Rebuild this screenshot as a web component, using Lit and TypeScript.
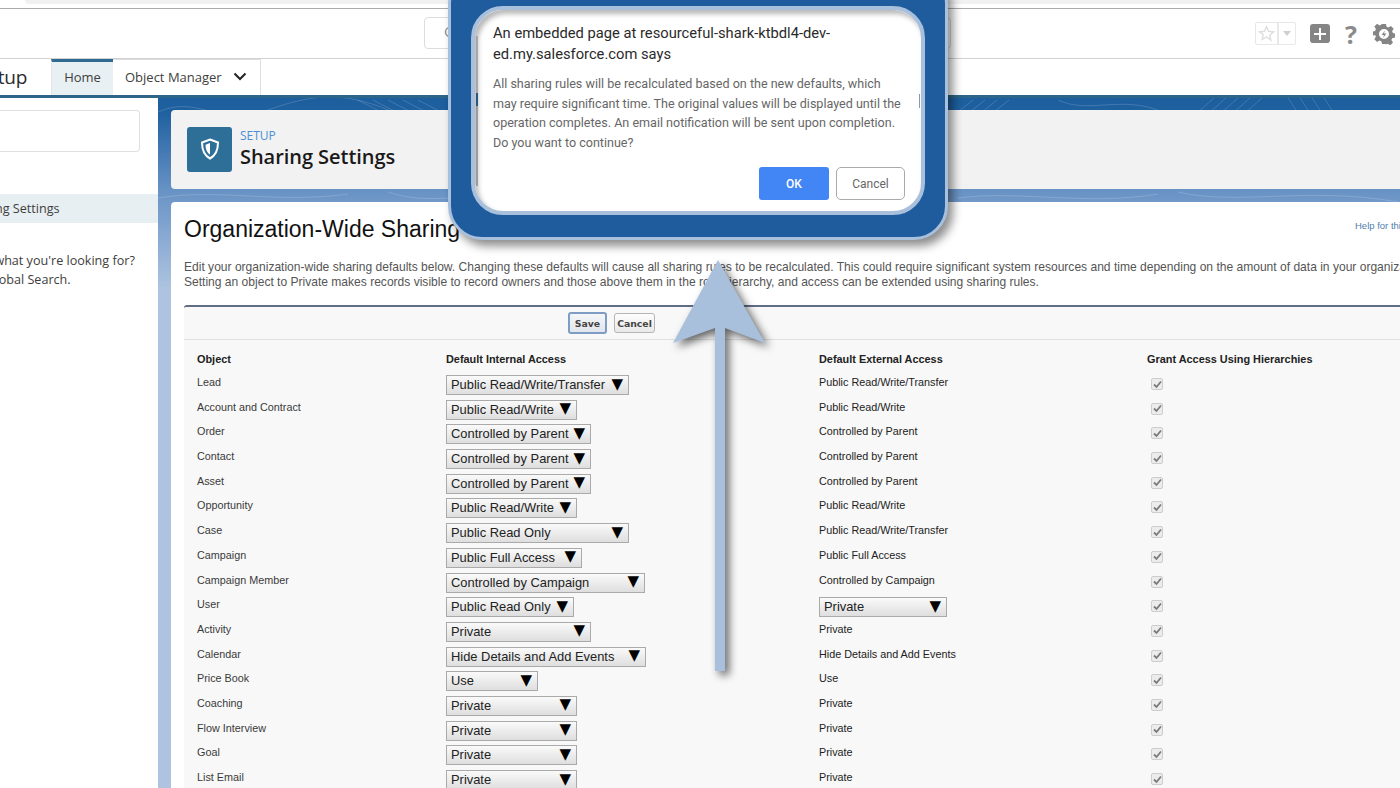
import { LitElement, html, css, svg } from "lit";
import { customElement } from "lit/decorators.js";

interface Row { name: string; sel: string; w: number; ext: string; extW?: number }
const rows: Row[] = [
  { name: "Lead", sel: "Public Read/Write/Transfer", w: 183, ext: "Public Read/Write/Transfer" },
  { name: "Account and Contract", sel: "Public Read/Write", w: 131, ext: "Public Read/Write" },
  { name: "Order", sel: "Controlled by Parent", w: 145, ext: "Controlled by Parent" },
  { name: "Contact", sel: "Controlled by Parent", w: 145, ext: "Controlled by Parent" },
  { name: "Asset", sel: "Controlled by Parent", w: 145, ext: "Controlled by Parent" },
  { name: "Opportunity", sel: "Public Read/Write", w: 131, ext: "Public Read/Write" },
  { name: "Case", sel: "Public Read Only", w: 183, ext: "Public Read/Write/Transfer" },
  { name: "Campaign", sel: "Public Full Access", w: 136, ext: "Public Full Access" },
  { name: "Campaign Member", sel: "Controlled by Campaign", w: 199, ext: "Controlled by Campaign" },
  { name: "User", sel: "Public Read Only", w: 128, ext: "Private", extW: 128 },
  { name: "Activity", sel: "Private", w: 145, ext: "Private" },
  { name: "Calendar", sel: "Hide Details and Add Events", w: 200, ext: "Hide Details and Add Events" },
  { name: "Price Book", sel: "Use", w: 92, ext: "Use" },
  { name: "Coaching", sel: "Private", w: 131, ext: "Private" },
  { name: "Flow Interview", sel: "Private", w: 131, ext: "Private" },
  { name: "Goal", sel: "Private", w: 131, ext: "Private" },
  { name: "List Email", sel: "Private", w: 131, ext: "Private" },
];

const contours = [
  "M0 14 C40 -4 60 30 110 12 S190 -6 240 16",
  "M200 2 L225 15 M215 2 L240 15 M230 2 L255 15 M245 2 L270 15 M260 2 L285 15",
  "M320 15 C340 0 380 0 400 15", "M800 14 L815 2 M812 14 L827 2 M824 14 L839 2 M836 14 L851 2",
  "M1040 14 L1056 0 M1052 14 L1068 0 M1064 14 L1080 0 M1076 14 L1092 0 M1088 14 L1104 0",
  "M1130 0 L1140 15 M1142 0 L1152 15 M1154 0 L1164 15 M1166 0 L1176 15",
  "M900 2 C930 16 960 -2 1000 12",
  "M0 100 C60 90 120 106 190 96", "M230 94 C280 112 340 86 400 100",
  "M800 100 C860 92 930 108 1000 96", "M1020 94 C1080 108 1150 88 1240 104",
];

@customElement("app-root")
export class AppRoot extends LitElement {
  static styles = css`
    :host { display: block; width: 1400px; height: 788px; position: relative; overflow: hidden; background: #fff; font-family: "Liberation Sans", Arial, sans-serif; }
    .chrome { height: 8px; background: #fff; border-bottom: 1px solid #aaa; padding-left: 25px; }
    .chrome div { height: 4px; background: #f1f1f1; border-radius: 0 0 0 6px; }
    .top { height: 49px; border-bottom: 1px solid #d2d2d2; display: flex; align-items: center; padding-left: 424px; box-sizing: content-box; background: #fff; }
    .search { width: 527px; height: 32px; border: 1px solid #dcdcdc; border-radius: 4px; flex: none; display: flex; align-items: center; padding-left: 19px; box-sizing: border-box; margin-top: -1px; }
    .tools { display: flex; align-items: center; margin-left: 304px; height: 100%; }
    .fav { width: 41px; height: 23px; border: 1px solid #e8e8e8; border-radius: 2px; display: flex; box-sizing: border-box; }
    .fav span { display: flex; align-items: center; justify-content: center; }
    .fav .star { width: 21px; border-right: 2px solid #e8e8e8; }
    .fav .caret { flex: 1; }
    .fav .caret i { border: 4px solid transparent; border-top: 5px solid #cfcfcf; border-bottom: 0; }
    .plus { width: 20px; height: 19px; margin-left: 14px; background: #858585; border-radius: 3px; display: flex; align-items: center; justify-content: center; }
    .help { width: 16px; margin-left: 13px; color: #8a8a8a; font: 700 25px "Open Sans", sans-serif; line-height: 24px; text-align: center; }
    .gear { margin-left: 14px; display: block; }

    .nav { height: 36px; display: flex; background: #fff; }
    .brand { width: 51px; overflow: hidden; display: flex; justify-content: flex-end; align-items: center; padding-right: 24px; box-sizing: border-box; font: 400 19px "Open Sans", sans-serif; letter-spacing: -.3px; color: #2b2b2b; }
    .brand span { flex: none; }
    .tab { display: flex; align-items: center; font: 400 13px "Open Sans", sans-serif; color: #3e3e3c; box-sizing: border-box; padding-bottom: 2px; }
    .home { width: 62px; justify-content: center; background: #e9f0f4; border-top: 3px solid #2f6a90; border-left: 1px solid #e2e6e9; padding-bottom: 3px; }
    .om { width: 148px; padding-left: 12px; border-right: 1px solid #dedede; border-top: 1px solid #dedede; gap: 11px; }

    .body { display: flex; height: 693px; border-top: 3px solid #2d6588; }
    .side { width: 158px; flex: none; background: #fff; overflow: hidden; padding-top: 12px; box-sizing: border-box; font: 400 12.6px "Open Sans", sans-serif; color: #3e3e3c; }
    .qf { height: 42px; width: 140px; box-sizing: border-box; border: 1px solid #e0e0e0; border-left: 0; border-radius: 0 4px 4px 0; }
    .sel-row { height: 29px; margin-top: 42px; background: #e8eff3; display: flex; align-items: center; white-space: nowrap; padding-bottom: 1px; box-sizing: border-box; }
    .sel-row span { margin-left: -35px; }
    .miss { margin: 28px 0 0 -70px; line-height: 19px; white-space: nowrap; }

    .main { flex: 1; min-width: 0; position: relative; background: linear-gradient(#1d5e9e 0, #1f609f 14px, #6a94c6 95px, #adc3e0 190px, #aec3e0 100%); padding: 12px 0 0 13px; display: flex; flex-direction: column; gap: 13px; overflow: hidden; }
    .topo { position: absolute; left: 0; top: 0; width: 1242px; height: 110px; }
    .phead { position: relative; height: 79px; width: 1260px; flex: none; background: #f3f2f2; border-radius: 4px; display: flex; align-items: center; padding-left: 16px; box-sizing: border-box; gap: 8px; }
    .tile { width: 45px; height: 45px; background: #2e6f98; border-radius: 3px; display: flex; align-items: center; justify-content: center; margin-top: -1px; }
    .crumb { font: 400 12px "Open Sans", sans-serif; color: #4a8ed6; line-height: 14px; margin-top: -1px; }
    .ptitle { font: 600 20px "Open Sans", sans-serif; color: #1a1a1a; line-height: 27px; letter-spacing: -.05px; }

    .card { position: relative; flex: 1; width: 1300px; background: #fff; border-radius: 4px 0 0 0; padding: 0 0 0 13px; box-sizing: border-box; }
    .hrow { display: flex; justify-content: space-between; height: 55px; align-items: center; width: 1216px; }
    h1 { margin: 0; font: 400 23px "Liberation Sans", Arial, sans-serif; color: #111; white-space: nowrap; }
    .hlink { font-size: 9.5px; color: #4f7fae; white-space: nowrap; margin: -8px 0 0 0; width: 45px; overflow: hidden; }
    .desc { margin: 0; font-size: 12.05px; line-height: 15px; color: #555; white-space: nowrap; height: 45px; padding-top: 3px; box-sizing: content-box; }
    .pb { background: #f8f8f8; border-top: 2px solid #5f6d85; border-radius: 3px 0 0 0; height: 500px; }
    .btns { height: 33px; border-bottom: 1px solid #e0e0e0; display: flex; align-items: center; gap: 7px; padding-left: 384px; box-sizing: border-box; }
    .btn { height: 20px; display: flex; align-items: center; justify-content: center; box-sizing: border-box; font: 700 9.3px "DejaVu Sans", sans-serif; color: #444; background: linear-gradient(#fdfdfd, #e9e9e9); border: 1px solid #b5b5b5; border-radius: 3px; }
    .btn.save { width: 39px; height: 22px; border: 2px solid #7e9cc4; background: linear-gradient(#f4f6f8, #e1e6ec); }
    .btn.cancel { width: 41px; }
    .grid { padding: 9px 0 0 13px; display: grid; grid-template-columns: 249px 373px 328px 1fr; grid-template-rows: 21px; grid-auto-rows: 24.7px; width: 1216px; font-size: 10.8px; color: #3a3a3a; }
    .th { font-weight: 700; color: #222; line-height: 20px; font-size: 10.9px; }
    .cell { line-height: 24px; white-space: nowrap; }
    .cell.dark { color: #222; }
    .select { height: 20px; margin-top: 5px; box-sizing: border-box; border: 1px solid #aaa; background: linear-gradient(#fafafa, #dedede); color: #222; font-size: 12.9px; display: flex; justify-content: space-between; align-items: center; padding: 0 5px 0 4px; white-space: nowrap; line-height: 18px; }
    .select b { font: 400 15px "DejaVu Sans", sans-serif; color: #000; margin-top: -3px; }
    .check { margin: 8px 0 0 4px; width: 12px; height: 12px; box-sizing: border-box; border: 1px solid #cdcdcd; border-radius: 2px; background: #ececec; display: flex; align-items: center; justify-content: center; }

    .callout { position: absolute; left: 448px; top: -30px; width: 500px; height: 270px; box-sizing: border-box; background: #1f5c9d; border: 3px solid #a9c0dd; border-radius: 34px; box-shadow: 5px 6px 10px rgba(0,0,0,.45); padding: 33px 20px 0; }
    .dialog { height: 209px; box-sizing: border-box; background: #fff; border: 4px solid #a9c0dd; border-radius: 32px; padding: 13px 18px 0 18px; font-family: Roboto, sans-serif; position: relative; box-shadow: inset 3px 4px 5px rgba(0,0,0,.28); }
    .dialog::before { content: ""; position: absolute; left: 1px; top: 26px; height: 150px; width: 2px; background: linear-gradient(rgba(90,90,90,.35) 0 38%, #27597f 38% 47%, rgba(90,90,90,.45) 47%); }
    .dialog::after { content: ""; position: absolute; right: 1px; top: 84px; height: 14px; width: 1px; background: #8a9aac; }
    .dialog h2 { margin: 0; font: 400 14.72px/21px Roboto, sans-serif; color: #2a2a2a; }
    .dialog p { margin: 9px 0 0; font: 400 12.55px/19.7px Roboto, sans-serif; color: #666; white-space: nowrap; }
    .actions { position: absolute; right: 16px; top: 157px; display: flex; gap: 7px; }
    .ok, .no { height: 33px; display: flex; align-items: center; justify-content: center; font: 500 12px Roboto, sans-serif; box-sizing: border-box; }
    .ok { width: 70px; background: #4285f4; color: #fff; border-radius: 3px; }
    .no { width: 69px; background: #fff; color: #666; border: 1px solid #aaa; border-radius: 5px; font-weight: 400; }
    .arrow { position: absolute; left: 0; top: 0; filter: drop-shadow(4px 4px 4px rgba(0,0,0,.6)); }
  `;

  render() {
    return html`
      <div class="chrome"><div></div></div>
      <div class="top">
        <div class="search">
          <svg width="14" height="14" viewBox="0 0 14 14"><circle cx="6" cy="6" r="4.5" fill="none" stroke="#9a9a9a" stroke-width="1.6"/><path d="M9.5 9.5L13 13" stroke="#9a9a9a" stroke-width="1.6"/></svg>
        </div>
        <div class="tools">
          <div class="fav">
            <span class="star"><svg width="17" height="17" viewBox="0 0 24 24"><path d="M12 2.5l2.9 6.4 7 .8-5.2 4.7 1.4 6.9L12 16.9l-6.100 3.400 1.400-6.900L2.100 9.700l7-.8z" fill="none" stroke="#dedede" stroke-width="2"/></svg></span>
            <span class="caret"><i></i></span>
          </div>
          <div class="plus"><svg width="14" height="14" viewBox="0 0 14 14"><path d="M7 1v12M1 7h12" stroke="#fff" stroke-width="2"/></svg></div>
          <div class="help">?</div>
          <svg class="gear" width="22" height="22" viewBox="0 0 22 22">
            <path fill="#858585" fill-rule="evenodd" d="M9 1h4l.6 2.800 1.900.8 2.400-1.600 2.800 2.800-1.600 2.400.8 1.900 2.100.5v4l-2.800.6-.8 1.900 1.600 2.400-2.800 2.800-2.400-1.600-1.900.8L13 21H9l-.6-2.800-1.900-.8-2.400 1.600-2.800-2.800 1.600-2.400-.8-1.900L0 12.400v-4l2.100-.5.800-1.900L1.300 3.600 4.100.8l2.400 1.600 1.900-.8zM11 6a5 5 0 100 10 5 5 0 000-10z"/>
            <path fill="#858585" d="M12 7.500L8.500 12H11l-1 3 3.500-4.500H11z"/>
          </svg>
        </div>
      </div>
      <div class="nav">
        <div class="brand"><span>Setup</span></div>
        <div class="tab home">Home</div>
        <div class="tab om">Object Manager
          <svg width="14" height="9" viewBox="0 0 14 9"><path d="M1.500 1.500L7 7l5.500-5.500" fill="none" stroke="#222" stroke-width="2"/></svg>
        </div>
      </div>
      <div class="body">
        <aside class="side">
          <div class="qf"></div>
          <div class="sel-row"><span>Sharing Settings</span></div>
          <div class="miss">Didn't find what you're looking for?<br />Try using Global Search.</div>
        </aside>
        <main class="main">
          <svg class="topo" viewBox="0 0 1242 110" fill="none" stroke="#fff" stroke-opacity=".16" stroke-width="1">
            ${contours.map((d) => svg`<path d=${d} />`)}
          </svg>
          <div class="phead">
            <div class="tile">
              <svg width="20" height="22" viewBox="0 0 20 22">
                <path d="M10 1.500L18 4.500C18 12 15.500 17.500 10 20.500 4.500 17.500 2 12 2 4.500z" fill="none" stroke="#fff" stroke-width="2"/>
                <path d="M10 5L5.500 6.800C5.500 11.500 7 14.800 10 16.800z" fill="#fff"/>
              </svg>
            </div>
            <div>
              <div class="crumb">SETUP</div>
              <div class="ptitle">Sharing Settings</div>
            </div>
          </div>
          <section class="card">
            <div class="hrow">
              <h1>Organization-Wide Sharing</h1>
              <span class="hlink">Help for this Page</span>
            </div>
            <p class="desc">Edit your organization-wide sharing defaults below. Changing these defaults will cause all sharing rules to be recalculated. This could require significant system resources and time depending on the amount of data in your organization.<br />Setting an object to Private makes records visible to record owners and those above them in the role hierarchy, and access can be extended using sharing rules.</p>
            <div class="pb">
              <div class="btns">
                <div class="btn save">Save</div>
                <div class="btn cancel">Cancel</div>
              </div>
              <div class="grid">
                <div class="th">Object</div>
                <div class="th">Default Internal Access</div>
                <div class="th">Default External Access</div>
                <div class="th">Grant Access Using Hierarchies</div>
                ${rows.map((r) => html`
                  <div class="cell">${r.name}</div>
                  <div><div class="select" style="width:${r.w}px"><span>${r.sel}</span><b>▼</b></div></div>
                  <div class="${r.extW ? "" : "cell dark"}">
                    ${r.extW
                      ? html`<div class="select" style="width:${r.extW}px"><span>${r.ext}</span><b>▼</b></div>`
                      : r.ext}
                  </div>
                  <div><div class="check"><svg width="9" height="9" viewBox="0 0 9 9"><path d="M1 4.500L3.500 7 8 1.500" fill="none" stroke="#7a7a7a" stroke-width="1.800"/></svg></div></div>
                `)}
              </div>
            </div>
          </section>
        </main>
      </div>

      <svg class="arrow" width="1400" height="788" viewBox="0 0 1400 788">
        <path fill="#a9c0dd" d="M718 260L765 343 725 328V671H715V328L673 343z"/>
      </svg>
      <div class="callout">
        <div class="dialog">
          <h2>An embedded page at resourceful-shark-ktbdl4-dev-<br />ed.my.salesforce.com says</h2>
          <p>All sharing rules will be recalculated based on the new defaults, which<br />may require significant time. The original values will be displayed until the<br />operation completes. An email notification will be sent upon completion.<br />Do you want to continue?</p>
          <div class="actions"><div class="ok">OK</div><div class="no">Cancel</div></div>
        </div>
      </div>
    `;
  }
}
